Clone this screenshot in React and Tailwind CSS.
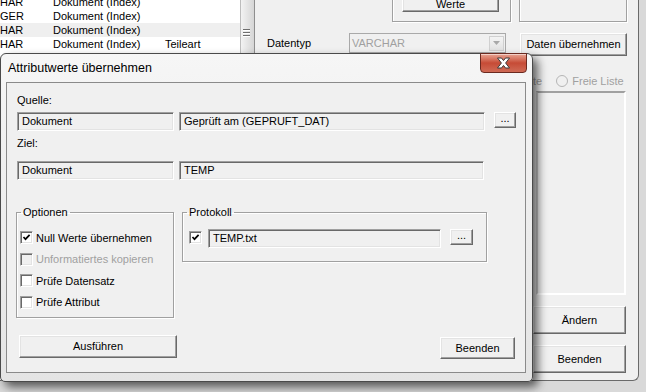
import React from 'react';

const listRows = [
  { a: 'HAR', b: 'Dokument (Index)', c: '', shaded: false },
  { a: 'GER', b: 'Dokument (Index)', c: '', shaded: false },
  { a: 'HAR', b: 'Dokument (Index)', c: '', shaded: true },
  { a: 'HAR', b: 'Dokument (Index)', c: 'Teileart', shaded: false },
];

function Raised({ className = '', children }) {
  return (
    <div
      className={`bg-[#f0f0f0] border border-t-white border-l-white border-b-[#696969] border-r-[#696969] shadow-[inset_-1px_-1px_0_#a0a0a0,inset_1px_1px_0_#e3e3e3] flex items-center justify-center ${className}`}
    >
      {children}
    </div>
  );
}

function Sunken({ className = '', children }) {
  return (
    <div
      className={`h-[19px] bg-[#f0f0f0] border border-t-[#a0a0a0] border-l-[#a0a0a0] border-b-white border-r-white shadow-[inset_1px_1px_0_#696969,inset_-1px_-1px_0_#e3e3e3] flex items-center pl-[4px] ${className}`}
    >
      {children}
    </div>
  );
}

function Check({ checked, disabled }) {
  return (
    <div
      className={`w-[13px] h-[13px] shrink-0 flex items-center justify-center border border-t-[#a0a0a0] border-l-[#a0a0a0] border-b-white border-r-white shadow-[inset_1px_1px_0_#696969,inset_-1px_-1px_0_#e3e3e3] ${disabled ? 'bg-[#f0f0f0]' : 'bg-white'}`}
    >
      {checked && (
        <svg width="9" height="9" viewBox="0 0 9 9">
          <polyline points="1.5,4 3.5,6.2 7.6,1.8" fill="none" stroke="#000" strokeWidth="1.7" />
        </svg>
      )}
    </div>
  );
}

function GroupBox({ title, className = '', children }) {
  return (
    <fieldset className={`border border-[#a0a0a0] shadow-[inset_1px_1px_0_#fff,1px_1px_0_#fff] ${className}`}>
      <legend className="ml-[4px] px-[2px] leading-[14px]">{title}</legend>
      {children}
    </fieldset>
  );
}

function CheckRow({ label, checked, disabled }) {
  return (
    <div className="flex items-center h-[13px]">
      <Check checked={checked} disabled={disabled} />
      <span className={`ml-[3px] leading-[14px] ${disabled ? 'text-[#a0a0a0]' : ''}`}>{label}</span>
    </div>
  );
}

function Dialog() {
  return (
    <div className="absolute left-0 top-[53px] w-[533px] h-[329px] rounded-t-[6px] rounded-b-[5px] border border-[#4a4a4a] bg-gradient-to-b from-[#f6f6f6] to-[#e4e4e4] shadow-[5px_5px_10px_rgba(0,0,0,0.6)] flex flex-col">
      {/* Title bar */}
      <div className="h-[28px] flex items-center pl-[7px] relative">
        <span className="text-[12.5px] mt-[1px]">Attributwerte übernehmen</span>
        <div className="absolute left-[479px] -top-[1px] w-[47px] h-[20px] rounded-b-[4px] border border-[#6b2a20] bg-gradient-to-b from-[#e8a493] via-[#c64b36] to-[#cf6a55] flex items-center justify-center shadow-[inset_0_1px_0_rgba(255,255,255,0.5)]">
          <svg width="15" height="12" viewBox="0 0 15 12">
            <path
              d="M1.5 1 H5.5 L7.5 3.6 L9.5 1 H13.5 L9.6 6 L13.5 11 H9.5 L7.5 8.4 L5.5 11 H1.5 L5.4 6 Z"
              fill="#fff"
              stroke="#3b3b3b"
              strokeWidth="1"
              strokeLinejoin="round"
            />
          </svg>
        </div>
      </div>

      {/* Client area */}
      <div className="ml-[5px] w-[520px] h-[291px] border border-[#8a8a8a] bg-[#f0f0f0] flex flex-col">
        <div className="ml-[10px] mt-[10px] leading-[14px]">Quelle:</div>
        <div className="flex items-start mt-[5px] ml-[10px]">
          <Sunken className="w-[157px]">Dokument</Sunken>
          <Sunken className="w-[306px] ml-[5px]">Geprüft am (GEPRUFT_DAT)</Sunken>
          <Raised className="w-[22px] h-[16px] ml-[9px] pb-[3px]">...</Raised>
        </div>
        <div className="ml-[10px] mt-[5px] leading-[14px]">Ziel:</div>
        <div className="flex items-start mt-[11px] ml-[10px]">
          <Sunken className="w-[157px]">Dokument</Sunken>
          <Sunken className="w-[305px] ml-[5px]">TEMP</Sunken>
        </div>

        <div className="flex items-start mt-[25px] ml-[9px]">
          <GroupBox title="Optionen" className="w-[158px] h-[113px]">
            <div className="flex flex-col gap-[8.5px] mt-[12px] ml-[3px]">
              <CheckRow label="Null Werte übernehmen" checked />
              <CheckRow label="Unformatiertes kopieren" disabled />
              <CheckRow label="Prüfe Datensatz" />
              <CheckRow label="Prüfe Attribut" />
            </div>
          </GroupBox>
          <GroupBox title="Protokoll" className="w-[305px] h-[57px] ml-[8px]">
            <div className="flex items-start mt-[10px] ml-[6px]">
              <div className="mt-[2px]">
                <Check checked />
              </div>
              <Sunken className="w-[233px] ml-[6px]">TEMP.txt</Sunken>
              <Raised className="w-[23px] h-[16px] ml-[9px] pb-[3px]">...</Raised>
            </div>
          </GroupBox>
        </div>

        <div className="flex items-start mt-[17px]">
          <Raised className="ml-[12px] w-[158px] h-[23px]">Ausführen</Raised>
          <Raised className="ml-[263px] mt-[2px] w-[75px] h-[22px]">Beenden</Raised>
        </div>
      </div>
    </div>
  );
}

export default function App() {
  return (
    <div className="relative w-[646px] h-[392px] overflow-hidden bg-[#d9d9d9] font-['Liberation_Sans',Arial,sans-serif] text-[11px] text-black">
      {/* Background window */}
      <div className="w-[639px] h-[381px] flex bg-[#f0f0f0] border-r border-b border-[#6a6a6a] rounded-br-[6px] overflow-hidden">
        {/* List */}
        <div className="w-[240px] shrink-0 bg-white">
          <div className="-mt-[5px]">
            {listRows.map((r, i) => (
              <div key={i} className={`h-[14px] flex items-center leading-[14px] ${r.shaded ? 'bg-[#efefef]' : ''}`}>
                <span className="w-[53px]">{r.a}</span>
                <span className="w-[112px]">{r.b}</span>
                <span>{r.c}</span>
              </div>
            ))}
          </div>
        </div>

        {/* Scrollbar */}
        <div className="w-[15px] shrink-0 border-l border-[#bdbdbd] border-r border-r-[#8e8e8e] bg-gradient-to-r from-[#f3f3f3] to-[#d6d6d6]">
          <div className="mt-[29px] ml-[2px] w-[7px] flex flex-col gap-[1px]">
            <div className="h-[1px] bg-[#6e6e6e] shadow-[0_1px_0_#fff]" />
            <div className="h-[1px] mt-[1px] bg-[#6e6e6e] shadow-[0_1px_0_#fff]" />
            <div className="h-[1px] mt-[1px] bg-[#6e6e6e] shadow-[0_1px_0_#fff]" />
          </div>
        </div>

        {/* Right panel, left part */}
        <div className="w-[264px] shrink-0 flex flex-col">
          <div className="ml-[137px] -mt-[14px] w-[119px] h-[36px] border border-[#a0a0a0] shadow-[inset_1px_1px_0_#fff,1px_1px_0_#fff]">
            <Raised className="ml-[9px] mt-[1px] w-[97px] h-[24px] pt-[8px]">Werte</Raised>
          </div>
          <div className="flex items-center mt-[11px]">
            <span className="ml-[12px] w-[82px]">Datentyp</span>
            <div className="w-[157px] h-[20px] flex items-center bg-[#f0f0f0] border border-[#a9a9a9] pl-[2px]">
              <span className="flex-1 text-[#a0a0a0]">VARCHAR</span>
              <div className="w-[15px] h-[15px] mr-[1px] border border-[#d0d0d0] bg-gradient-to-b from-[#f4f4f4] to-[#e2e2e2] flex items-center justify-center">
                <svg width="7" height="4" viewBox="0 0 7 4">
                  <path d="M0 0 H7 L3.5 4 Z" fill="#a8a8a8" />
                </svg>
              </div>
            </div>
          </div>
        </div>

        {/* Right panel, right column */}
        <div className="w-[108px] shrink-0 flex flex-col">
          <div className="-mt-[14px] w-[108px] h-[36px] border border-[#a0a0a0] shadow-[inset_1px_1px_0_#fff,1px_1px_0_#fff]" />
          <Raised className="ml-[1px] mt-[11px] w-[107px] h-[23px]">Daten übernehmen</Raised>
          <div className="flex items-center mt-[18px] h-[14px] text-[#a0a0a0] whitespace-nowrap">
            <span>Liste</span>
            <div className="ml-[14px] w-[12px] h-[12px] rounded-full border border-[#b5b5b5] bg-[#f0f0f0] shrink-0" />
            <span className="ml-[4px]">Freie Liste</span>
          </div>
          <div className="ml-[17px] mt-[3px] w-[90px] h-[204px] border-2 border-t-[#a0a0a0] border-l-[#c8c8c8] border-b-white border-r-white" />
          <Raised className="ml-[14px] mt-[11px] w-[93px] h-[28px]">Ändern</Raised>
          <Raised className="ml-[14px] mt-[11px] w-[93px] h-[28px]">Beenden</Raised>
        </div>

        <div className="flex-1" />
      </div>

      <Dialog />
    </div>
  );
}
